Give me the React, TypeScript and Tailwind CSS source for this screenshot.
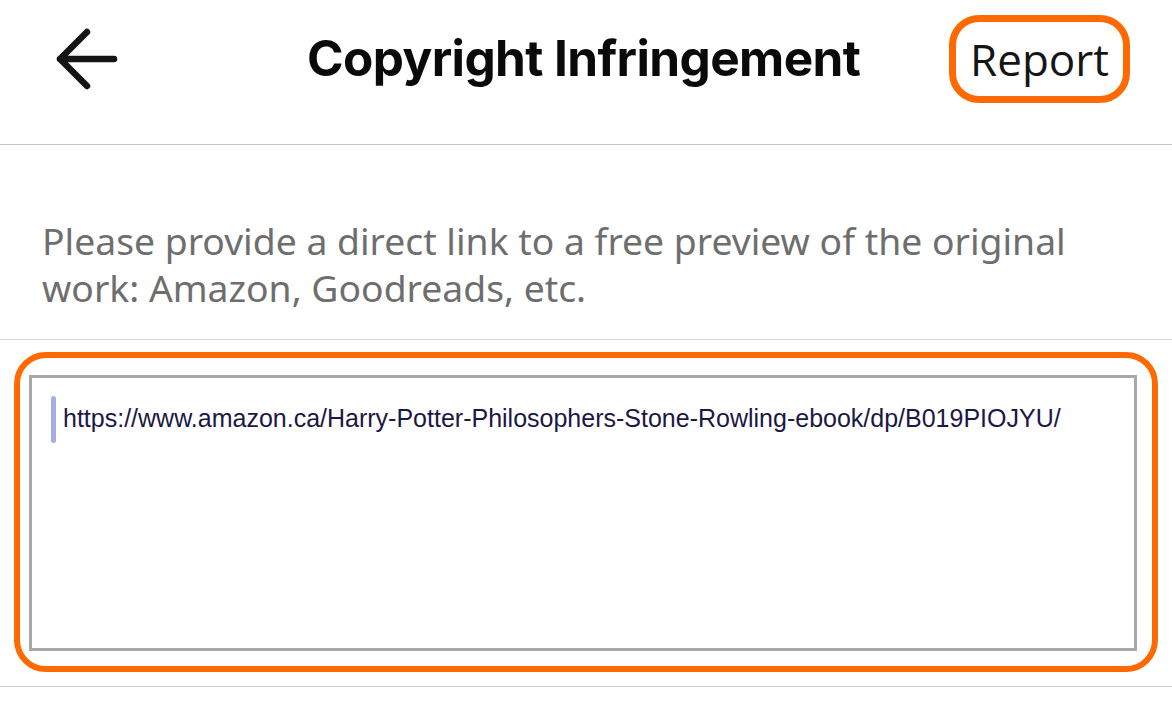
const BackArrow = () => (
  <svg width="64" height="64" viewBox="0 0 64 64" fill="none">
    <path
      d="M59 32H5M32 5L5 32L32 59"
      stroke="#141414"
      strokeWidth="6.5"
      strokeLinecap="round"
      strokeLinejoin="round"
    />
  </svg>
);

export default function App() {
  return (
    <div className="w-[1172px] h-[712px] bg-white overflow-hidden">
      <header className="h-[145px] flex items-center border-b border-[#c4c4c4] pl-[55px] pr-[42px] pb-[27px]">
        <BackArrow />
        <h1 className="font-['Inter',sans-serif] font-bold text-[49.5px] tracking-[-0.6px] text-[#0a0a0a] ml-[188px]">
          Copyright Infringement
        </h1>
        <button className="ml-auto h-[88px] px-[14px] rounded-[30px] border-[7px] border-[#ff6a00] font-['Open_Sans',sans-serif] text-[44px] text-[#151515] leading-none">
          Report
        </button>
      </header>
      <p className="font-['Noto_Sans',sans-serif] text-[37.3px] leading-[47px] text-[#6e6e6e] px-[42px] pt-[72px] pb-[28px] border-b border-[#dcdcdc]">
        Please provide a direct link to a free preview of the original work: Amazon, Goodreads, etc.
      </p>
      <div className="pt-[12px] px-[14px] pb-[14px] border-b border-[#d0d0d0]">
        <div className="h-[320px] rounded-[32px] border-[6px] border-[#ff6a00] pt-[17px] pl-[9px] pr-[15px] pb-[15px]">
          <div className="h-full border-[3px] border-[#a8a8a8] pt-[18px] pl-[19px] flex items-start gap-[7px]">
            <span className="w-[5px] h-[47px] shrink-0 rounded-full bg-[#a3aee8]" />
            <span className="font-['Liberation_Sans',sans-serif] text-[25px] text-[#1b1845] pt-[4px] whitespace-nowrap">
              https://www.amazon.ca/Harry-Potter-Philosophers-Stone-Rowling-ebook/dp/B019PIOJYU/
            </span>
          </div>
        </div>
      </div>
    </div>
  );
}
